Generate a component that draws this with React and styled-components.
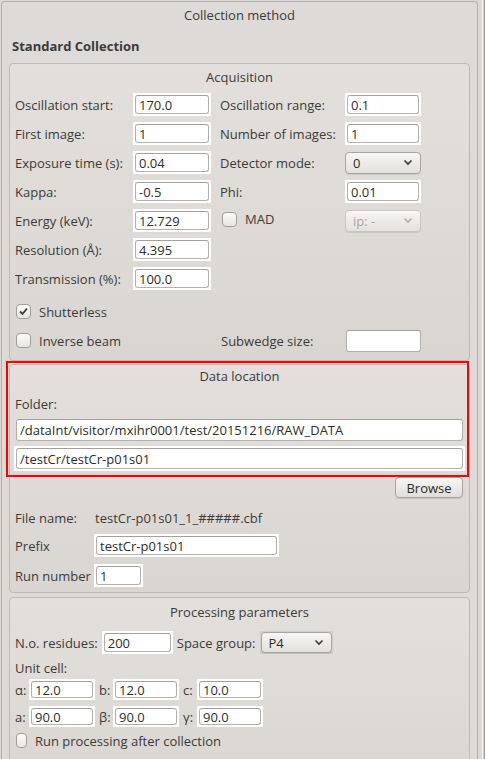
import React from 'react';
import styled, { createGlobalStyle } from 'styled-components';

const GlobalStyle = createGlobalStyle`
    html, body {
        margin: 0;
        padding: 0;
        background: #dcd8d5;
    }
    body {
        font-family: "Open Sans", "DejaVu Sans", sans-serif;
        font-size: 13px;
        color: #3c3b37;
    }
`

const Page = styled.div`
    display: flex;
    width: 485px;
    height: 759px;
    overflow: hidden;
    background: #dcd8d5;
`

const Outer = styled.div`
    width: 477px;
    margin: 1px 0 0 1px;
    border: 1px solid #b3afab;
    border-bottom: none;
    border-radius: 4px 4px 0 0;
    background: #dedad7;
    padding: 0 7px;
    box-sizing: border-box;
`

const Strip = styled.div`
    flex: 1;
    border-left: 1px solid #f2f0ee;
    border-right: 1px solid #9c9894;
    margin-left: 4px;
    background: #d6d2cf;
`

const PanelTitle = styled.div`
    text-align: center;
    height: 27px;
    line-height: 27px;
`

const Heading = styled.div`
    font-weight: bold;
    padding: 9px 0 0 3px;
    height: 34px;
    line-height: 16px;
    box-sizing: border-box;
`

const Group = styled.div`
    position: relative;
    border: 1px solid #bdb9b5;
    border-radius: 4px;
    background: linear-gradient(#e2dfdc, #d9d6d2);
    padding: 0 5px;
    margin-top: ${p => p.top || 0}px;
    height: ${p => p.height ? p.height + 'px' : 'auto'};
    box-sizing: border-box;
`

const GroupTitle = styled.div`
    text-align: center;
    height: ${p => p.height || 28}px;
    line-height: ${p => p.height || 28}px;
`

const Highlight = styled.div`
    position: absolute;
    left: -4px;
    right: 0;
    top: -4px;
    height: 116px;
    border: 2px solid #ff0000;
    box-sizing: border-box;
    pointer-events: none;
`

const FormGrid = styled.div`
    display: grid;
    grid-template-columns: ${p => p.cols};
    grid-auto-rows: 23px;
    row-gap: 6px;
    align-items: center;
    margin-top: ${p => p.top || 0}px;
`

const Label = styled.span`
    white-space: nowrap;
    padding-left: ${p => p.indent || 0}px;
    width: ${p => p.width ? p.width + 'px' : 'auto'};
    flex-shrink: 0;
`

const Frame = styled.span`
    display: flex;
    background: ${p => p.tone || '#fff'};
    padding: ${p => p.pad ?? 2}px;
    width: ${p => p.width}px;
    height: ${p => p.height || 23}px;
    margin-left: ${p => p.shift || 0}px;
    box-sizing: border-box;
    flex-shrink: 0;
`

const Input = styled.input`
    width: 100%;
    height: 100%;
    box-sizing: border-box;
    border: 1px solid #b4b0ab;
    border-top-color: #a39f9b;
    border-radius: 3px;
    background: #fff;
    font: inherit;
    color: #2e2d29;
    padding: 0 3px;
    outline: none;
`

const PlainInput = styled(Input)`
    width: ${p => p.width ? p.width + 'px' : '100%'};
    height: 22px;
`

const SelectBox = styled.div`
    display: flex;
    align-items: center;
    justify-content: space-between;
    width: ${p => p.width}px;
    height: ${p => p.height || 22}px;
    box-sizing: border-box;
    padding: 0 7px 0 7px;
    border: 1px solid ${p => p.disabled ? '#c9c5c1' : '#a8a49f'};
    border-radius: 4px;
    background: linear-gradient(#f7f6f5, #e3e0dd);
    box-shadow: 0 1px 0 rgba(0,0,0,0.08);
    color: ${p => p.disabled ? '#aaa6a2' : '#2e2d29'};
`

const Chevron = ({ color }) => (
    <svg width="10" height="7" viewBox="0 0 10 7">
        <polyline points="1.5,1.5 5,5 8.5,1.5" fill="none" stroke={color} strokeWidth="1.6" />
    </svg>
)

const Check = styled.span`
    display: inline-flex;
    align-items: center;
    gap: 8px;
    white-space: nowrap;
`

const Box = styled.span`
    width: 15px;
    height: 15px;
    box-sizing: border-box;
    border: 1px solid #a19d99;
    border-radius: 4px;
    background: linear-gradient(#fbfbfa, #e7e5e2);
    display: flex;
    align-items: center;
    justify-content: center;
`

const CheckBox = ({ checked, label }) => (
    <Check>
        <Box>
            {checked && (
                <svg width="11" height="11" viewBox="0 0 11 11">
                    <polyline points="2,5.5 4.5,8 9,2.5" fill="none" stroke="#3c3b37" strokeWidth="1.8" />
                </svg>
            )}
        </Box>
        {label}
    </Check>
)

const OptionRow = styled.div`
    display: grid;
    grid-template-columns: 205px 125px 76px;
    align-items: center;
    height: 23px;
    margin-top: ${p => p.top || 0}px;
    padding-left: 1px;
`

const Stack = styled.div`
    display: flex;
    flex-direction: column;
    gap: ${p => p.gap || 5}px;
    padding: 0 1px;
    margin-top: ${p => p.top || 0}px;
`

const RightRow = styled.div`
    display: flex;
    justify-content: flex-end;
    padding-right: 1px;
    margin-top: ${p => p.top || 0}px;
`

const Button = styled.button`
    height: 21px;
    width: 68px;
    font: inherit;
    color: #2e2d29;
    border: 1px solid #a8a49f;
    border-radius: 4px;
    background: linear-gradient(#f7f6f5, #e0ddda);
    box-shadow: 0 1px 0 rgba(0,0,0,0.1);
    padding: 0;
`

const InfoRow = styled.div`
    display: flex;
    align-items: center;
    height: ${p => p.height || 23}px;
    padding-top: ${p => p.pad || 0}px;
    margin-top: ${p => p.top || 0}px;
    box-sizing: border-box;
`

const CellRow = styled.div`
    display: flex;
    align-items: center;
    gap: 4px;
    height: ${p => p.height || 23}px;
    margin-top: ${p => p.top || 0}px;
`

const CellLabel = styled.span`
    width: ${p => p.width || 10}px;
`

const Acquisition = () => (
    <Group height={298}>
        <GroupTitle height={26}>Acquisition</GroupTitle>
        <FormGrid cols="118px 78px 134px 76px" top={3}>
            <Label>Oscillation start:</Label>
            <Frame width={78}><Input defaultValue="170.0" /></Frame>
            <Label indent={9}>Oscillation range:</Label>
            <Frame width={76}><Input defaultValue="0.1" /></Frame>

            <Label>First image:</Label>
            <Frame width={78}><Input defaultValue="1" /></Frame>
            <Label indent={9}>Number of images:</Label>
            <Frame width={76}><Input defaultValue="1" /></Frame>

            <Label>Exposure time (s):</Label>
            <Frame width={78}><Input defaultValue="0.04" /></Frame>
            <Label indent={9}>Detector mode:</Label>
            <SelectBox width={76}>0<Chevron color="#3c3b37" /></SelectBox>

            <Label>Kappa:</Label>
            <Frame width={78}><Input defaultValue="-0.5" /></Frame>
            <Label indent={9}>Phi:</Label>
            <Frame width={76}><Input defaultValue="0.01" /></Frame>

            <Label>Energy (keV):</Label>
            <Frame width={78}><Input defaultValue="12.729" /></Frame>
            <Label indent={11}><CheckBox label="MAD" /></Label>
            <SelectBox width={76} disabled>ip: -<Chevron color="#b3afab" /></SelectBox>

            <Label>Resolution (Å):</Label>
            <Frame width={78}><Input defaultValue="4.395" /></Frame>
            <span />
            <span />

            <Label>Transmission (%):</Label>
            <Frame width={78}><Input defaultValue="100.0" /></Frame>
        </FormGrid>
        <OptionRow top={10}>
            <CheckBox checked label="Shutterless" />
        </OptionRow>
        <OptionRow top={6}>
            <CheckBox label="Inverse beam" />
            <Label>Subwedge size:</Label>
            <PlainInput width={75} />
        </OptionRow>
    </Group>
)

const DataLocation = () => (
    <Group top={3} height={229}>
        <Highlight />
        <GroupTitle height={23}>Data location</GroupTitle>
        <InfoRow height={28} pad={4}>Folder:</InfoRow>
        <Stack gap={5} top={3}>
            <PlainInput defaultValue="/dataInt/visitor/mxihr0001/test/20151216/RAW_DATA" />
            <Frame width={451} height={25} shift={-2}>
                <Input defaultValue="/testCr/testCr-p01s01" />
            </Frame>
        </Stack>
        <RightRow top={6}>
            <Button>Browse</Button>
        </RightRow>
        <InfoRow top={8}>
            <Label width={80}>File name:</Label>
            <span>testCr-p01s01_1_#####.cbf</span>
        </InfoRow>
        <InfoRow top={5}>
            <Label width={79}>Prefix</Label>
            <Frame width={185}><Input defaultValue="testCr-p01s01" /></Frame>
        </InfoRow>
        <InfoRow top={7}>
            <Label width={79}>Run number</Label>
            <Frame width={49}><Input defaultValue="1" /></Frame>
        </InfoRow>
    </Group>
)

const Processing = () => (
    <Group top={4} height={200}>
        <GroupTitle>Processing parameters</GroupTitle>
        <CellRow top={5}>
            <span>N.o. residues:</span>
            <Frame width={71}><Input defaultValue="200" /></Frame>
            <span>Space group:</span>
            <Frame width={73} tone="#d0cdca" pad={1}>
                <SelectBox width={71} height={21}>P4<Chevron color="#3c3b37" /></SelectBox>
            </Frame>
        </CellRow>
        <InfoRow height={22} top={3}>Unit cell:</InfoRow>
        <CellRow height={21}>
            <CellLabel>α:</CellLabel>
            <Frame width={66} height={21}><Input defaultValue="12.0" /></Frame>
            <CellLabel>b:</CellLabel>
            <Frame width={66} height={21}><Input defaultValue="12.0" /></Frame>
            <CellLabel>c:</CellLabel>
            <Frame width={66} height={21}><Input defaultValue="10.0" /></Frame>
        </CellRow>
        <CellRow height={21} top={6}>
            <CellLabel>a:</CellLabel>
            <Frame width={66} height={21}><Input defaultValue="90.0" /></Frame>
            <CellLabel>β:</CellLabel>
            <Frame width={66} height={21}><Input defaultValue="90.0" /></Frame>
            <CellLabel>γ:</CellLabel>
            <Frame width={66} height={21}><Input defaultValue="90.0" /></Frame>
        </CellRow>
        <OptionRow top={2}>
            <CheckBox label="Run processing after collection" />
        </OptionRow>
    </Group>
)

const App = () => (
    <Page>
        <GlobalStyle />
        <Outer>
            <PanelTitle>Collection method</PanelTitle>
            <Heading>Standard Collection</Heading>
            <Acquisition />
            <DataLocation />
            <Processing />
        </Outer>
        <Strip />
    </Page>
)

export default App;
